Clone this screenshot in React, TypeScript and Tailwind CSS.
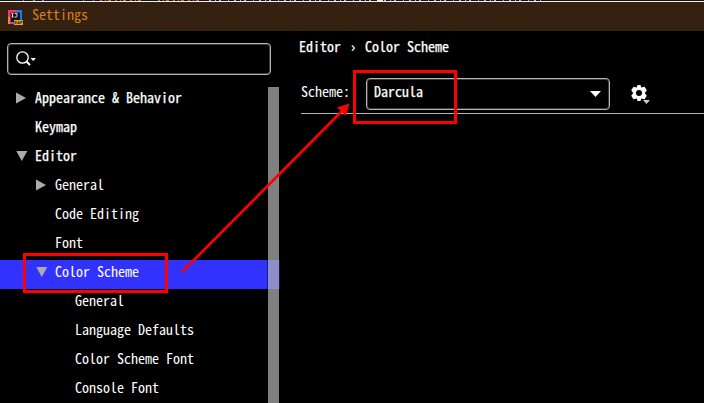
import React from 'react';

type Node = { label: string; level: number; open?: boolean; bold?: boolean; selected?: boolean };

const nodes: Node[] = [
  { label: 'Appearance & Behavior', level: 0, open: false, bold: true },
  { label: 'Keymap', level: 0, bold: true },
  { label: 'Editor', level: 0, open: true, bold: true },
  { label: 'General', level: 1, open: false },
  { label: 'Code Editing', level: 1 },
  { label: 'Font', level: 1 },
  { label: 'Color Scheme', level: 1, open: true, selected: true },
  { label: 'General', level: 2 },
  { label: 'Language Defaults', level: 2 },
  { label: 'Color Scheme Font', level: 2 },
  { label: 'Console Font', level: 2 },
];

const indents = ['pl-[15px]', 'pl-[35px]', 'pl-[55px]'];
const strong = '[-webkit-text-stroke:0.25px_white]';

function Toggle({ open }: { open?: boolean }) {
  return (
    <svg className="h-[14px] w-5 shrink-0" viewBox="0 0 20 14" fill="#ababab">
      {open === false && <path d="M1 1.500L11 7L1 12.500Z" />}
      {open === true && <path d="M1.300 2H12.300L6.800 12Z" />}
    </svg>
  );
}

function AppLogo() {
  return (
    <svg className="mt-[3px] h-4 w-4" viewBox="0 0 16 16">
      <defs>
        <linearGradient id="logo" x1="0" y1="0" x2="1" y2="0.3">
          <stop offset="0" stopColor="#ff315f" />
          <stop offset="0.45" stopColor="#e94384" />
          <stop offset="0.65" stopColor="#4c6fe8" />
          <stop offset="1" stopColor="#087cfa" />
        </linearGradient>
      </defs>
      <path d="M0 0H14V14H0Z" fill="url(#logo)" />
      <path d="M0 6L3 9V14H0Z" fill="#f58436" />
      <path d="M2 11H7V14H2Z" fill="#9b54df" />
      <path d="M2.500 2.500H12V12H2.500Z" fill="#151515" />
      <path d="M3.500 3.500H5.500M4.500 3.500V7M3.500 7H5.500M7 3.500H9V6.500L8.300 7H6.500" stroke="#ddd" strokeWidth="1" fill="none" />
      <path d="M6 10H15V15H6Z" fill="#e8a62c" />
      <text x="6.300" y="14" fontSize="4.200" fontWeight="bold" fontFamily="Liberation Sans, sans-serif" fill="#35210c">EAP</text>
    </svg>
  );
}

/* Sliver of the editor window that shows above the dialog. */
function EditorSliver() {
  return (
    <svg className="block h-px w-full shrink-0 bg-[#14141f]" viewBox="0 0 704 1" preserveAspectRatio="none">
      <path d="M23 .5H24M33 .5H35M42 .5H44M83 .5H84M93 .5H94" stroke="#8d8d9c" />
      <path d="M100 .5H141M158 .5H200" stroke="#cf6a35" strokeDasharray="2 3 1 2 3 4" />
      <path d="M209 .5H376M384 .5H542" stroke="#a9b8cc" strokeDasharray="2 4 1 3 2 7 1 5" />
      <path d="M377 .5H383" stroke="#e8e8e8" />
    </svg>
  );
}

export default function App() {
  return (
    <div className="relative flex h-[403px] w-[704px] flex-col overflow-hidden bg-black text-[14px] leading-[20px] text-white [font-family:'Noto_Sans_Mono_CJK_SC','DejaVu_Sans_Mono',monospace]">
      <EditorSliver />
      <div className="h-px shrink-0 bg-[#f0eeee]" />
      <header className="flex h-[29px] shrink-0 items-center bg-[#35210f] pl-2 text-[#d97f18]">
        <AppLogo />
        <span className="mb-[6px] ml-2 whitespace-pre">Settings</span>
      </header>
      <div className="flex min-h-0 flex-1">
        <aside className="flex w-[280px] shrink-0 flex-col pt-3">
          <div className="ml-[7px] flex h-8 w-[264px] shrink-0 items-center rounded-[4px] border border-[#b5b5b5] pl-2 shadow-[inset_0_0_0_1px_#3c3c3c]">
            <svg className="h-5 w-6" viewBox="0 0 24 20" fill="none" stroke="white">
              <circle cx="6.500" cy="8.500" r="5.700" strokeWidth="1.300" />
              <path d="M10.500 12.500L14 16" strokeWidth="2" />
              <path d="M14.500 9H20L17.200 12Z" fill="white" stroke="none" />
            </svg>
          </div>
          <div className="mt-[11px] flex min-h-0 flex-1">
            <div className="flex w-[268px] shrink-0 flex-col">
              {nodes.map((n, i) => (
                <div key={i} className={`flex h-[29px] shrink-0 items-center pb-[6px] ${indents[n.level]} ${n.selected ? 'border-r border-[#1a1a88] bg-[#3232ff]' : ''}`}>
                  <Toggle open={n.open} />
                  <span className={`mb-[2px] whitespace-pre ${n.bold ? strong : ''}`}>{n.label}</span>
                </div>
              ))}
            </div>
            <div className="mt-px flex w-[11px] flex-col bg-[#808080]">
              <div className="mt-[173px] h-[29px] bg-[#8e8ec9]" />
            </div>
            <div className="mt-[174px] h-[29px] w-px bg-[#16164d]" />
          </div>
        </aside>
        <main className="flex flex-1 flex-col pl-[21px] pt-[5px]">
          <div className={`-ml-[2px] flex ${strong}`}>
            <span className="w-[42px]">Editor</span>
            <span className="w-[24px] text-center">›</span>
            <span>Color Scheme</span>
          </div>
          <div className="mt-[21px] flex h-[33px] items-center">
            <span className="mb-[6px] w-[65px]">Scheme:</span>
            <div className="flex h-[32px] w-[244px] items-center justify-between rounded-[4px] border border-[#b5b5b5] px-[7px] shadow-[inset_0_0_0_1px_#3c3c3c]">
              <span className={`mb-[6px] ${strong}`}>Darcula</span>
              <svg className="mr-px h-[6px] w-[11px]" viewBox="0 0 11 6" fill="white"><path d="M0 0H11L5.500 6Z" /></svg>
            </div>
            <svg className="ml-[20px] h-5 w-5" viewBox="0 0 20 20">
              <path d="M7.500 1H10.500L11.300 3.500L14.500 2.700L16.800 6.300L14.800 9L16.800 11.700L14.500 15.300L11.300 14.500L10.500 17H7.500L6.700 14.500L3.500 15.300L1.200 11.700L3.200 9L1.200 6.300L3.500 2.700L6.700 3.500Z" fill="white" />
              <circle cx="9" cy="9" r="3" fill="black" />
              <path d="M13 16H20L16.500 20Z" fill="#ccc" />
            </svg>
          </div>
          <div className="mt-[3px] h-px bg-[#b5b5b5]" />
        </main>
      </div>
      <div className="absolute left-[23px] top-[253px] h-[40px] w-[145px] border-[3px] border-[#ff0000]" />
      <div className="absolute left-[353px] top-[70px] h-[54px] w-[104px] border-[3px] border-[#ff0000]" />
      <svg className="absolute left-0 top-0 h-[403px] w-[704px]" viewBox="0 0 704 403">
        <path d="M182 272L343 110" stroke="#ff0000" strokeWidth="2.600" />
        <path d="M349.500 103.500L337 107.500L346 116Z" fill="#ff0000" />
      </svg>
    </div>
  );
}
